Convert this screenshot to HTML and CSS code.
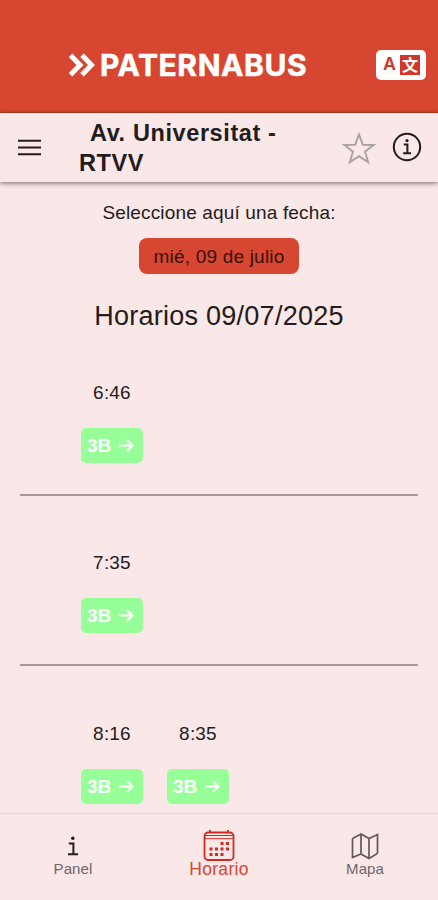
FILE: index.html
```
<!DOCTYPE html>
<html lang="es">

<head>
  <meta charset="UTF-8" />
  <meta name="viewport" content="width=device-width, initial-scale=1.0" />
  <title>Paternabus - Horario</title>
  <link rel="stylesheet" href="styles.css">
</head>

<body>
  <header class="header">
    <div class="logo">
      <svg class="logo-arrows" viewBox="0 0 28 24">
        <path d="M3 2.2l9.500 9.800L3 21.800M14.500 2.200l9.500 9.800-9.500 9.800" />
      </svg>
      <span class="logo-text">PATERNABUS</span>
    </div>
    <button class="lang">
      <span class="lang-a">A</span>
      <span class="lang-zh">文</span>
    </button>
  </header>

  <div class="toolbar">
    <svg class="menu" viewBox="0 0 22 16">
      <path d="M0 1.500h22M0 8h22M0 14.500h22" />
    </svg>
    <h1 class="stop">Av. Universitat -<br>RTVV</h1>
    <svg class="star" viewBox="0 0 36 34">
      <path d="M18 3.500l3.800 10.200 10.900.300-8.700 6.700 3.200 10.600-9.200-6.200-9.200 6.200 3.200-10.600-8.700-6.700 10.900-.300z" />
    </svg>
    <svg class="info" viewBox="0 0 30 30">
      <circle cx="15" cy="15" r="13.200" />
      <path d="M11.800 12.600h3.600v8.400M11.200 21.200h7.800" />
      <circle class="dot" cx="15" cy="8.600" r="1.600" />
    </svg>
  </div>

  <main class="content">
    <p class="label">Seleccione aquí una fecha:</p>
    <button class="date">mié, 09 de julio</button>
    <h2 class="title">Horarios 09/07/2025</h2>

    <div class="hour">
      <div class="bus">
        <span class="time">6:46</span>
        <span class="line">3B <svg viewBox="0 0 14 14"><path d="M0 7h12.500M7.400 1.800L12.600 7l-5.200 5.200" /></svg></span>
      </div>
    </div>
    <div class="hour">
      <div class="bus">
        <span class="time">7:35</span>
        <span class="line">3B <svg viewBox="0 0 14 14"><path d="M0 7h12.500M7.400 1.800L12.600 7l-5.200 5.200" /></svg></span>
      </div>
    </div>
    <div class="hour">
      <div class="bus">
        <span class="time">8:16</span>
        <span class="line">3B <svg viewBox="0 0 14 14"><path d="M0 7h12.500M7.400 1.800L12.600 7l-5.200 5.200" /></svg></span>
      </div>
      <div class="bus">
        <span class="time">8:35</span>
        <span class="line">3B <svg viewBox="0 0 14 14"><path d="M0 7h12.500M7.400 1.800L12.600 7l-5.200 5.200" /></svg></span>
      </div>
    </div>
  </main>

  <nav class="tabs">
    <a class="tab">
      <svg class="icon-panel" viewBox="0 0 12 20">
        <path d="M1.800 7.600h4.600v10.200M1 18.200h10" />
        <circle cx="5.800" cy="2.200" r="1.700" />
      </svg>
      <span>Panel</span>
    </a>
    <a class="tab active">
      <svg class="icon-calendar" viewBox="0 0 32 32">
        <rect x="1.500" y="3.500" width="29" height="27.500" rx="3.500" />
        <path d="M7 1v3M25 1v3" />
        <path class="thin" d="M2 6.500h28M2 9.700h28" />
        <g>
          <rect x="17.500" y="13" width="3" height="3" />
          <rect x="23" y="13" width="3" height="3" />
          <rect x="6.500" y="18.500" width="3" height="3" />
          <rect x="12" y="18.500" width="3" height="3" />
          <rect x="17.500" y="18.500" width="3" height="3" />
          <rect x="23" y="18.500" width="3" height="3" />
          <rect x="6.500" y="24" width="3" height="3" />
          <rect x="12" y="24" width="3" height="3" />
          <rect x="17.500" y="24" width="3" height="3" />
        </g>
      </svg>
      <span>Horario</span>
    </a>
    <a class="tab">
      <svg class="icon-map" viewBox="0 0 28 28">
        <path d="M10 2L2.500 6Q1.500 6.500 1.500 7.500V25.500L10 22L18 26.500L25.500 22Q26.500 21.500 26.500 20.500V2.500L18 6.500ZM10 2V22M18 6.500V26.500" />
      </svg>
      <span>Mapa</span>
    </a>
  </nav>
</body>

</html>
```
FILE: styles.css
```
* {
  box-sizing: border-box;
}

body {
  margin: 0;
  height: 900px;
  overflow: hidden;
  display: flex;
  flex-direction: column;
  background: #fae7e7;
  color: #221c1c;
  font-family: "Liberation Sans", Arial, sans-serif;
}

button {
  appearance: none;
  border: none;
  font-family: inherit;
  cursor: pointer;
}

svg {
  display: block;
  flex: none;
  fill: none;
  stroke: currentColor;
}

/* header */
.header {
  flex: none;
  height: 113px;
  padding: 17px 12px 0 67px;
  display: flex;
  align-items: center;
  justify-content: space-between;
  background: #d74630;
  border-bottom: 1px solid #c9391f;
  color: #fff;
}

.logo {
  display: flex;
  align-items: center;
  gap: 4px;
}

.logo-arrows {
  width: 29px;
  height: 24px;
  stroke-width: 5;
}

.logo-text {
  font-family: Inter, sans-serif;
  font-size: 30px;
  font-weight: 700;
  line-height: 32px;
  letter-spacing: 0.6px;
  -webkit-text-stroke: 0.5px #fff;
}

.lang {
  width: 50px;
  height: 30px;
  padding: 0 6px 0 7px;
  display: flex;
  align-items: center;
  justify-content: space-between;
  background: #fff;
  border-radius: 5px;
  color: #d0382a;
}

.lang-a {
  font-size: 18px;
  font-weight: 700;
}

.lang-zh {
  width: 20px;
  height: 20px;
  background: #d0382a;
  color: #fff;
  font-family: "Noto Sans CJK SC", sans-serif;
  font-size: 16px;
  font-weight: 700;
  line-height: 19px;
}

/* toolbar */
.toolbar {
  flex: none;
  height: 69px;
  padding: 0 16px 0 18px;
  display: flex;
  align-items: center;
  box-shadow: 0 1px 5px rgba(0, 0, 0, 0.55);
}

.menu {
  width: 23px;
  height: 17px;
  stroke-width: 2;
}

.stop {
  flex: 1;
  margin: 0 0 0 38px;
  font-size: 23.5px;
  line-height: 30px;
  letter-spacing: 0.6px;
  text-indent: 11px;
}

.star {
  width: 36px;
  height: 34px;
  color: #aaa2a2;
  stroke-width: 1.9;
}

.info {
  width: 30px;
  height: 30px;
  margin: -2px 0 0 15px;
  stroke-width: 2;
}

.info .dot {
  fill: currentColor;
  stroke: none;
}

/* content */
.content {
  flex: 1;
  min-height: 0;
  overflow: hidden;
  padding: 19px 20px 0;
  display: flex;
  flex-direction: column;
  align-items: center;
}

.label {
  margin: 0;
  font-size: 19px;
  line-height: 24px;
  letter-spacing: 0.15px;
}

.date {
  flex: none;
  width: 160px;
  height: 36px;
  margin-top: 13px;
  padding: 2px 0 0;
  background: #d74630;
  border-radius: 8px;
  color: #35120d;
  font-size: 19px;
  letter-spacing: 0.2px;
}

.title {
  margin: 26px 0 0;
  font-size: 27px;
  font-weight: 400;
  line-height: 32px;
  letter-spacing: 0.25px;
}

.hour {
  flex: none;
  width: 100%;
  height: 170px;
  padding: 55px 0 0 61px;
  display: flex;
  gap: 24px;
  border-bottom: 2px solid #a59a9b;
}

.title + .hour {
  height: 164px;
  padding-top: 49px;
}

.hour:last-child {
  padding-top: 56px;
}

.bus {
  width: 62px;
  display: flex;
  flex-direction: column;
  align-items: center;
  gap: 23px;
}

.time {
  font-size: 19px;
  line-height: 24px;
  letter-spacing: 0.2px;
}

.line {
  width: 62px;
  height: 35px;
  padding-left: 6px;
  display: flex;
  align-items: center;
  gap: 8px;
  background: #97ff97;
  border-radius: 5px;
  color: #fff;
  font-size: 19px;
  font-weight: 700;
}

.line svg {
  width: 15px;
  height: 15px;
  stroke-width: 2;
}

/* tabs */
.tabs {
  flex: none;
  height: 87px;
  padding-bottom: 20px;
  display: flex;
  border-top: 1px solid #e9d6d8;
}

.tab {
  flex: 1;
  display: flex;
  flex-direction: column;
  align-items: center;
  justify-content: flex-end;
  color: #706668;
  font-size: 15px;
  line-height: 22px;
  letter-spacing: 0.1px;
}

.tab.active {
  color: #d74630;
  font-size: 17.5px;
  letter-spacing: 0.3px;
}

.icon-panel {
  width: 12px;
  height: 20px;
  margin-bottom: 2px;
  color: #221c1c;
  stroke-width: 2;
}

.icon-panel circle {
  fill: currentColor;
  stroke: none;
}

.icon-calendar {
  width: 32px;
  height: 32px;
  margin-bottom: -3px;
  color: #d02b22;
  stroke-width: 1.8;
}

.icon-calendar .thin {
  stroke-width: 1;
}

.icon-calendar g {
  fill: currentColor;
  stroke: none;
}

.icon-map {
  width: 28px;
  height: 28px;
  margin-bottom: -2px;
  color: #625759;
  stroke-width: 1.7;
}
```
